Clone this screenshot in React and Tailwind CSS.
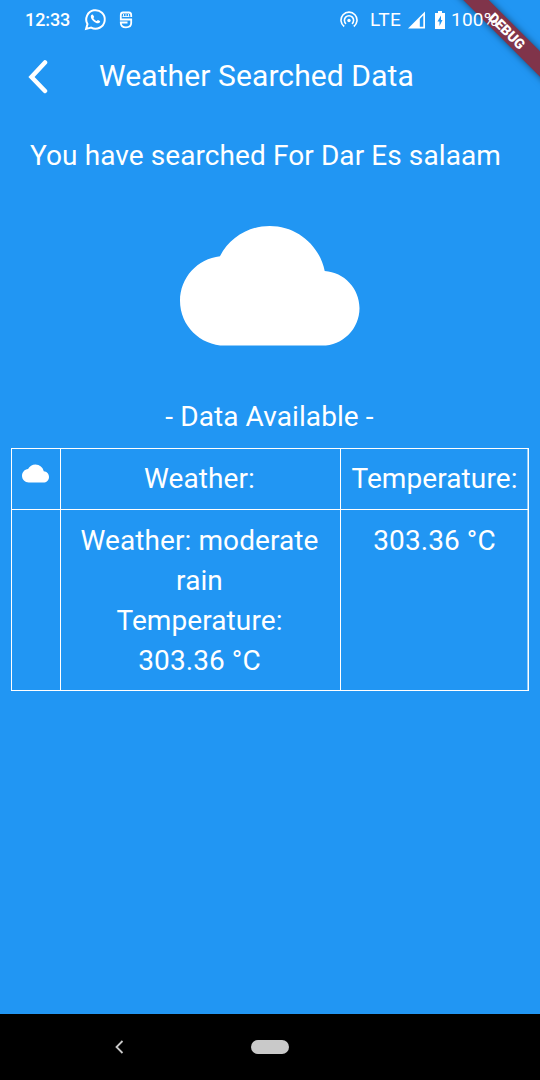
import React from "react";

const CLOUD =
  "M19.35 10.04C18.67 6.59 15.64 4 12 4 9.11 4 6.6 5.64 5.35 8.04 2.34 8.36 0 10.91 0 14c0 3.31 2.69 6 6 6h13c2.76 0 5-2.24 5-5 0-2.64-2.05-4.78-4.65-4.96z";

function Cloud({ className }) {
  return (
    <svg viewBox="0 0 24 24" className={className} fill="currentColor">
      <path d={CLOUD} />
    </svg>
  );
}

function StatusBar() {
  return (
    <div className="relative z-10 flex h-[39px] items-center text-[18px] leading-5 font-medium">
      <span className="ml-[25px] w-[46px] whitespace-nowrap tracking-[-0.1px]">12:33</span>
      <svg viewBox="0 0 24 24" className="ml-[12px] size-[25px]" fill="none" stroke="currentColor" strokeWidth="1.9">
        <path d="M3 21l1.3-4.6A8.9 8.9 0 1 1 7.8 19.8L3 21z" />
        <path fill="currentColor" stroke="none" d="M9.2 7.2c-.5-.4-1.6.4-1.7 1.6-.2 1.5 1.1 3.6 2.9 5.1 1.7 1.4 3.5 2 4.7 1.5 1-.4 1.5-1.2 1.3-1.8-.1-.3-1.7-1.1-2.1-1.2-.5 0-.8 1-1.2 1.1-.6.1-2.9-1.8-3.1-2.7 0-.4.7-.8.7-1.2 0-.5-1-2.1-1.5-2.4z" />
      </svg>
      <svg viewBox="0 0 16 18" className="ml-[10px] h-[18px] w-4" fill="none" stroke="currentColor" strokeWidth="1.8">
        <path d="M13.2 6V4Q13.2 1.5 11 1.5H5Q2.8 1.5 2.8 4V8.5H13.2V12Q13.2 16.3 8 16.3Q2.8 16.3 2.8 12V11.5H9.5" />
        <path d="M5.5 3v2.500M8 3v2.500M10.5 3v2.500M4.500 5.500h7" strokeWidth="0.9" />
      </svg>
      <svg viewBox="0 0 18 18" className="ml-[206px] size-[18px]" fill="none" stroke="currentColor" strokeWidth="1.6">
        <path d="M4.2 15.5A8 8 0 1 1 13.8 15.5M6 12.8A4.6 4.6 0 1 1 12 12.8" />
        <circle cx="9" cy="9.5" r="1.7" fill="currentColor" stroke="none" />
      </svg>
      <span className="ml-[12px] w-[32px] text-[19px] font-normal tracking-[0.5px]">LTE</span>
      <svg viewBox="0 0 18 18" className="ml-[6px] size-[18px]" fill="currentColor">
        <path fillRule="evenodd" d="M0 17.5L17 0.5V17.5H0zM11.8 8V15.7H15.3V4.2z" />
      </svg>
      <svg viewBox="0 0 12 18" className="ml-[8px] h-[18px] w-3" fill="currentColor">
        <path fillRule="evenodd" d="M4 0h4v2h3v16H1V2h3zM7 4.5L3.500 10.500h2V15L8.500 9H7z" />
      </svg>
      <span className="ml-[5px] text-[19px] font-normal tracking-[0.2px]">100%</span>
    </div>
  );
}

function DebugBanner() {
  return (
    <div className="absolute top-0 right-0 size-[100px] overflow-hidden">
      <div className="absolute top-[22.5px] left-[-2px] flex h-[18px] w-[140px] rotate-45 items-center justify-center bg-[#80344a] pr-[3px] text-[14px] font-black text-white shadow-[0_0_7px_rgba(0,0,0,0.5)]">
        DEBUG
      </div>
    </div>
  );
}

export default function App() {
  return (
    <div className="relative flex h-[1080px] w-[540px] flex-col overflow-hidden bg-[#2196f3] font-['Roboto',sans-serif] text-white">
      <StatusBar />
      <header className="flex h-[73px] items-center">
        <svg viewBox="0 0 22 36" className="ml-[27px] h-9 w-[22px]" fill="none" stroke="currentColor" strokeWidth="4.5" strokeLinecap="round">
          <path d="M18 4.5L4.5 19L18 33" />
        </svg>
        <h1 className="ml-[50px] text-[30px] tracking-[0.1px] whitespace-nowrap">Weather Searched Data</h1>
      </header>
      <main className="flex flex-1 flex-col text-[28px] leading-10 tracking-[0.09px]">
        <p className="mt-6 pl-[30px] whitespace-nowrap">You have searched For Dar Es salaam</p>
        <Cloud className="mt-5 size-[179.5px] self-center" />
        <p className="mt-[21.5px] pr-px text-center">- Data Available -</p>
        <table className="mt-[11px] ml-[11px] w-[518px] table-fixed border-collapse text-center">
          <colgroup>
            <col className="w-[49px]" />
            <col className="w-[280px]" />
            <col className="w-[188px]" />
          </colgroup>
          <tbody>
            <tr className="h-[61px]">
              <td className="border border-white py-0 pr-[2px] pl-0 align-top">
                <Cloud className="mx-auto mt-[11px] size-[27px]" />
              </td>
              <td className="border border-white py-0 pr-[2px] pl-0">Weather:</td>
              <td className="border border-white p-0 whitespace-nowrap shadow-[inset_-0.5px_0_0_#fff]">Temperature:</td>
            </tr>
            <tr className="h-[181px] align-top">
              <td className="border border-white p-0" />
              <td className="border border-white pt-[11px] pr-[17px] pl-[15px]">
                Weather: moderate
                <br />
                rain
                <br />
                Temperature:
                <br />
                303.36 °C
              </td>
              <td className="border border-white pt-[11px] shadow-[inset_-0.5px_0_0_#fff]">303.36 °C</td>
            </tr>
          </tbody>
        </table>
      </main>
      <nav className="flex h-[66px] items-center bg-black text-[#c9c9c9]">
        <svg viewBox="0 0 10 14" className="ml-[114px] h-[14px] w-[10px]" fill="none" stroke="currentColor" strokeWidth="1.8">
          <path d="M8.5 1L2.5 7L8.5 13" />
        </svg>
        <div className="ml-[127px] h-[14px] w-[38px] rounded-full bg-[#c9c9c9]" />
      </nav>
      <DebugBanner />
    </div>
  );
}
